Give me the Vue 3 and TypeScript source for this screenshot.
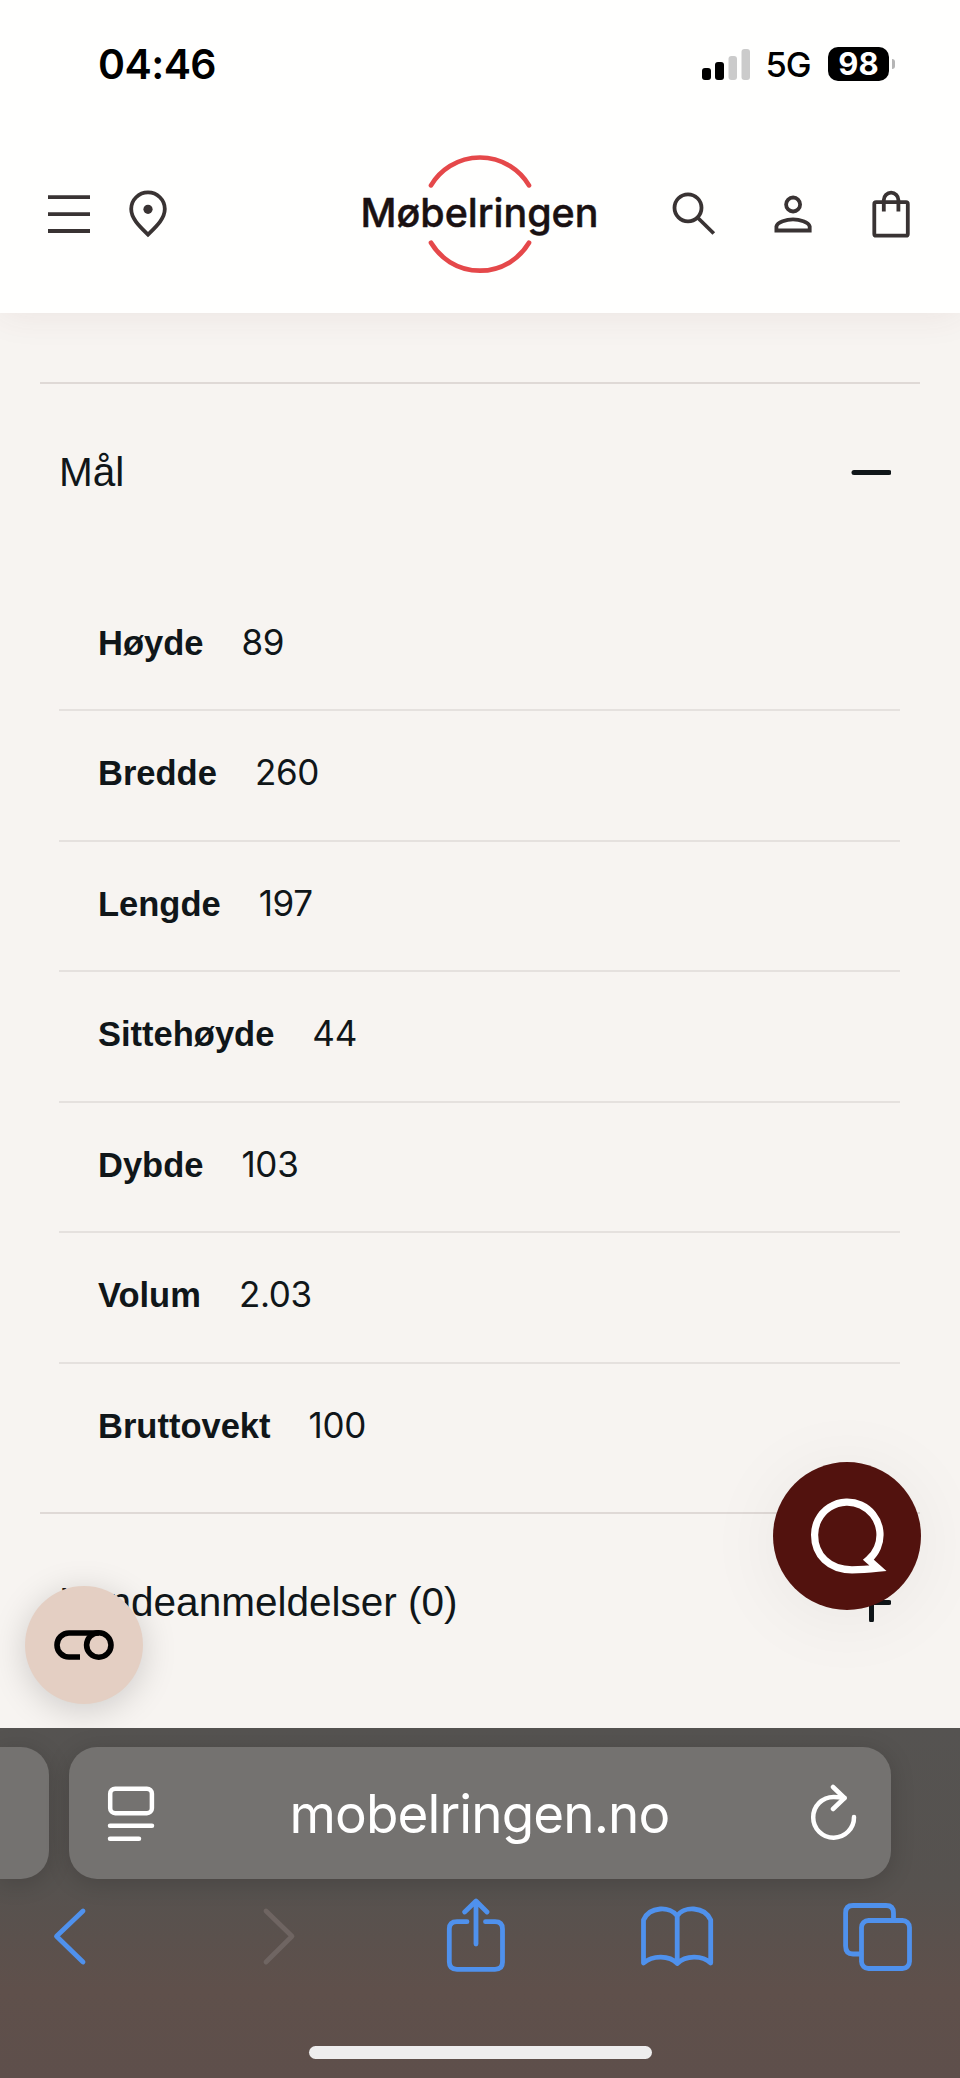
<script setup lang="ts">
interface Measure {
  label: string
  value: string
}

const measures: Measure[] = [
  { label: 'Høyde', value: '89' },
  { label: 'Bredde', value: '260' },
  { label: 'Lengde', value: '197' },
  { label: 'Sittehøyde', value: '44' },
  { label: 'Dybde', value: '103' },
  { label: 'Volum', value: '2.03' },
  { label: 'Bruttovekt', value: '100' },
]
</script>

<template>
  <div class="phone">
    <header class="top">
      <div class="status">
        <span class="time">04:46</span>
        <div class="status-right">
          <svg class="signal" width="48" height="31" viewBox="702 48 48 31">
            <rect x="702" y="67" width="9" height="12" rx="3" />
            <rect x="715" y="61" width="9" height="18" rx="3" />
            <rect x="728.5" y="55" width="8.5" height="24" rx="3" fill="#cbcbcb" />
            <rect x="741.5" y="48" width="8.5" height="31" rx="3" fill="#cbcbcb" />
          </svg>
          <span class="network">5G</span>
          <span class="battery">98</span>
          <span class="nub"></span>
        </div>
      </div>
      <nav class="nav">
        <svg width="42" height="48" viewBox="48 190 42 48" class="ico">
          <path d="M48 197.2H90M48 214.2H90M48 231H90" />
        </svg>
        <svg class="ico pin" width="38" height="48" viewBox="128.7 190 38 48">
          <path d="M147.7 234.6C139 226 130.9 218.5 130.9 209A16.8 16.6 0 0 1 164.5 209C164.5 218.5 156.4 226 147.7 234.6Z" />
          <circle cx="147.7" cy="209.3" r="4.6" class="dot" />
        </svg>
        <svg class="logo" width="280" height="140" viewBox="340 144 280 140">
          <g fill="none" stroke="#e5484a" stroke-width="4.7" stroke-linecap="round">
            <path d="M431 185.4A57 57 0 0 1 529 185.4" />
            <path d="M431 242.8A57 57 0 0 0 529 242.8" />
          </g>
          <text x="360.5" y="226.5" textLength="238" lengthAdjust="spacingAndGlyphs">Møbelringen</text>
        </svg>
        <svg class="ico search" width="44" height="48" viewBox="672 190 44 48">
          <circle cx="688" cy="207.8" r="13.5" />
          <path d="M697.5 217.5L713.8 233.5" />
        </svg>
        <svg class="ico person" width="38" height="48" viewBox="773.5 190 38 48">
          <circle cx="792.6" cy="204.5" r="7" />
          <path d="M775.9 230.5V226.5C777 222 786 219.4 792.5 219.4S808 222 809.2 226.5V230.5Z" />
        </svg>
        <svg class="ico bag" width="38" height="48" viewBox="872 190 38 48">
          <rect x="874.3" y="202.2" width="33.5" height="33.5" rx="1.8" />
          <path d="M883.8 211.5V200A7.3 7.3 0 0 1 898.4 200V211.5" />
        </svg>
      </nav>
    </header>

    <main class="content">
      <section class="panel open">
        <div class="panel-head">
          <h2>Mål</h2>
          <svg class="toggle" width="40" height="40" viewBox="0 0 40 40"><path d="M3 20.5H38" /></svg>
        </div>
        <dl class="rows">
          <div v-for="m in measures" :key="m.label" class="row">
            <dt>{{ m.label }}</dt>
            <dd>{{ m.value }}</dd>
          </div>
        </dl>
      </section>
      <section class="panel">
        <div class="panel-head">
          <h2>Kundeanmeldelser (0)</h2>
          <svg class="toggle" width="40" height="40" viewBox="0 0 40 40"><path d="M3 20.5H38M20.5 3V38" /></svg>
        </div>
      </section>
    </main>

    <button class="chat" aria-label="Chat">
      <svg width="80" height="80" viewBox="807 1496 80 80">
        <path d="M868.4 1559.8A32.7 32.7 0 1 0 814.6 1535C814.6 1555 829 1569.8 852 1569.8C861 1569.8 868 1569.3 878 1568.2Z" />
      </svg>
    </button>
    <button class="cookie" aria-label="Cookies">
      <svg width="62" height="32" viewBox="53 1628.5 62 32">
        <path d="M80 1656.5H69A12 12 0 0 1 69 1632.5H99" />
        <circle cx="98.8" cy="1644.5" r="12.2" />
      </svg>
    </button>

    <footer class="browser">
      <div class="tabs">
        <div class="tab previous"></div>
        <div class="tab current">
          <svg width="48" height="56" viewBox="107 1785 48 56" class="white">
            <rect x="110.2" y="1788.7" width="41.7" height="24.5" rx="5" />
            <path d="M110 1825.7H152M110 1838.7H139" />
          </svg>
          <span class="url">mobelringen.no</span>
          <svg width="48" height="58" viewBox="810 1782 48 58" class="white">
            <path d="M854 1815A20.4 20.4 0 1 1 833.6 1794.9Q838 1794.9 844.5 1796" />
            <path d="M833 1785L844.5 1796L833 1807" />
          </svg>
        </div>
      </div>
      <div class="tools">
        <svg width="36" height="60" viewBox="52 1906 36 60"><path d="M83 1911L56.5 1936.3L83 1962" /></svg>
        <svg class="forward" width="36" height="60" viewBox="261 1906 36 60"><path d="M266 1911L292 1936.3L266 1962" /></svg>
        <svg class="share" width="62" height="76" viewBox="445 1898 62 76">
          <path d="M467 1921.7H457Q449.3 1921.7 449.3 1929V1962Q449.3 1969.3 457 1969.3H495Q502.5 1969.3 502.5 1962V1929Q502.5 1921.7 495 1921.7H485.5" />
          <path d="M476 1944V1901.5M464.7 1912L476 1901L487 1912" />
        </svg>
        <svg class="book" width="76" height="64" viewBox="638.5 1904 76 64">
          <path d="M676.7 1963.5C669 1955 652 1955 643 1963V1920C649 1906 670 1906 676.7 1916C683 1906 704 1906 710.2 1920V1963C702 1955 685 1955 676.7 1963.5V1916" />
        </svg>
        <svg class="windows" width="72" height="72" viewBox="842 1900 72 72">
          <rect x="861.5" y="1920.5" width="48" height="48" rx="7" />
          <path d="M861 1954H853Q845.6 1954 845.6 1946V1913Q845.6 1905.5 853 1905.5H886Q893.5 1905.5 893.5 1913V1920" />
        </svg>
      </div>
      <div class="home"></div>
    </footer>
  </div>
</template>

<style>
body {
  margin: 0;
}
</style>

<style scoped>
* {
  box-sizing: border-box;
}
.phone {
  position: relative;
  display: flex;
  flex-direction: column;
  width: 960px;
  height: 2078px;
  overflow: hidden;
  background: #f7f4f1;
  color: #101619;
  font-family: Inter, "Liberation Sans", sans-serif;
}
.top {
  height: 313px;
  background: #fffffe;
  box-shadow: 0 0 36px rgba(110, 60, 50, 0.09);
}
.status {
  display: flex;
  align-items: center;
  justify-content: space-between;
  height: 115px;
  padding: 13px 65px 0 98px;
  color: #000;
}
.time {
  font-size: 41px;
  font-weight: 600;
  letter-spacing: -0.6px;
}
.status-right {
  display: flex;
  align-items: center;
}
.network {
  margin-left: 15px;
  width: 46px;
  font-size: 34.5px;
  font-weight: 500;
  letter-spacing: -1px;
  text-align: center;
}
.battery {
  margin-left: 17px;
  width: 61px;
  height: 34px;
  border-radius: 10px;
  background: #000;
  color: #fff;
  font-size: 31px;
  font-weight: 700;
  line-height: 34px;
  text-align: center;
}
.nub {
  width: 3px;
  height: 10px;
  margin-left: 3px;
  border-radius: 0 3px 3px 0;
  background: #b5b5b5;
}
.nav {
  display: flex;
  align-items: center;
  height: 198px;
  padding-left: 48px;
}
.ico {
  flex: none;
  fill: none;
  stroke: #393333;
  stroke-width: 3.8;
}
.ico .dot {
  fill: #393333;
  stroke: none;
}
.pin {
  margin-left: 38.7px;
}
.logo {
  flex: none;
  margin-left: 173.3px;
  overflow: visible;
}
.logo text {
  fill: #1a1112;
  stroke: #1a1112;
  stroke-width: 0.5;
  stroke-linejoin: round;
  font-size: 40px;
  font-weight: 500;
}
.search {
  margin-left: 52px;
}
.person {
  margin-left: 58px;
}
.bag {
  margin-left: 60px;
}
.content {
  flex: none;
  height: 1415px;
  padding: 69px 40px 0;
}
.panel {
  border-top: 2px solid #dfd9d6;
}
.open {
  height: 1130px;
}
.panel-head {
  display: flex;
  align-items: center;
  justify-content: space-between;
  height: 175px;
  padding: 0 29px 0 19px;
}
h2 {
  margin: 0;
  font-family: "Liberation Sans", Arial, sans-serif;
  font-size: 40.5px;
  font-weight: 400;
  line-height: 48px;
}
.toggle {
  fill: none;
  stroke: #101619;
  stroke-width: 5;
  stroke-linecap: round;
}
.rows {
  margin: 21.5px 20px 0 19px;
}
.row {
  display: flex;
  align-items: baseline;
  gap: 38px;
  height: 130.5px;
  padding: 41px 39px 0;
  border-bottom: 2px solid #e5e1de;
  font-size: 34.5px;
  line-height: 40px;
}
.row:last-child {
  border-bottom-color: transparent;
}
dt {
  font-family: "Liberation Sans", Arial, sans-serif;
  font-weight: 700;
}
dd {
  margin: 0;
  font-size: 35px;
  letter-spacing: -0.3px;
}
.chat,
.cookie {
  position: absolute;
  display: flex;
  align-items: center;
  justify-content: center;
  padding: 0;
  border: 0;
  border-radius: 50%;
}
.chat {
  left: 773px;
  top: 1462px;
  width: 148px;
  height: 148px;
  background: #52120e;
  box-shadow: 0 8px 80px rgba(0, 0, 0, 0.06);
}
.chat path {
  fill: none;
  stroke: #fff;
  stroke-width: 7.2;
  stroke-miterlimit: 10;
}
.cookie {
  left: 25px;
  top: 1585.5px;
  width: 118px;
  height: 118px;
  background: #e4cfc3;
  box-shadow: 0 6px 34px rgba(0, 0, 0, 0.17);
}
.cookie svg {
  fill: none;
  stroke: #000;
  stroke-width: 5.6;
}
.browser {
  position: relative;
  height: 350px;
  background: linear-gradient(#555351 0, #56524f 45%, #5f504b 75%, #5e4f4b 100%);
}
.tabs {
  display: flex;
  gap: 20px;
  padding-top: 19px;
}
.tab {
  height: 132px;
  background: #747270;
  box-shadow: 0 4px 24px rgba(0, 0, 0, 0.16);
}
.previous {
  width: 49px;
  border-radius: 0 28px 28px 0;
}
.current {
  display: flex;
  align-items: center;
  justify-content: space-between;
  width: 822px;
  padding: 0 33px 0 38px;
  border-radius: 28px;
}
.white {
  fill: none;
  stroke: #fff;
  stroke-width: 4.5;
  stroke-linecap: round;
  stroke-linejoin: round;
}
.url {
  margin: 2px 6px 0 0;
  color: #fff;
  font-size: 53px;
  letter-spacing: -0.9px;
}
.tools {
  display: flex;
  align-items: center;
  height: 76px;
  margin-top: 19px;
  padding-left: 52px;
  fill: none;
  stroke: #4f91ed;
  stroke-width: 4.8;
  stroke-linecap: round;
  stroke-linejoin: round;
}
.forward {
  margin-left: 173px;
  stroke: #6f6562;
}
.share {
  margin-left: 148px;
}
.book {
  margin-left: 131.5px;
}
.windows {
  margin-left: 127.5px;
}
.home {
  width: 343px;
  height: 13px;
  margin: 72px 0 0 309px;
  border-radius: 7px;
  background: #eeedee;
}
</style>
